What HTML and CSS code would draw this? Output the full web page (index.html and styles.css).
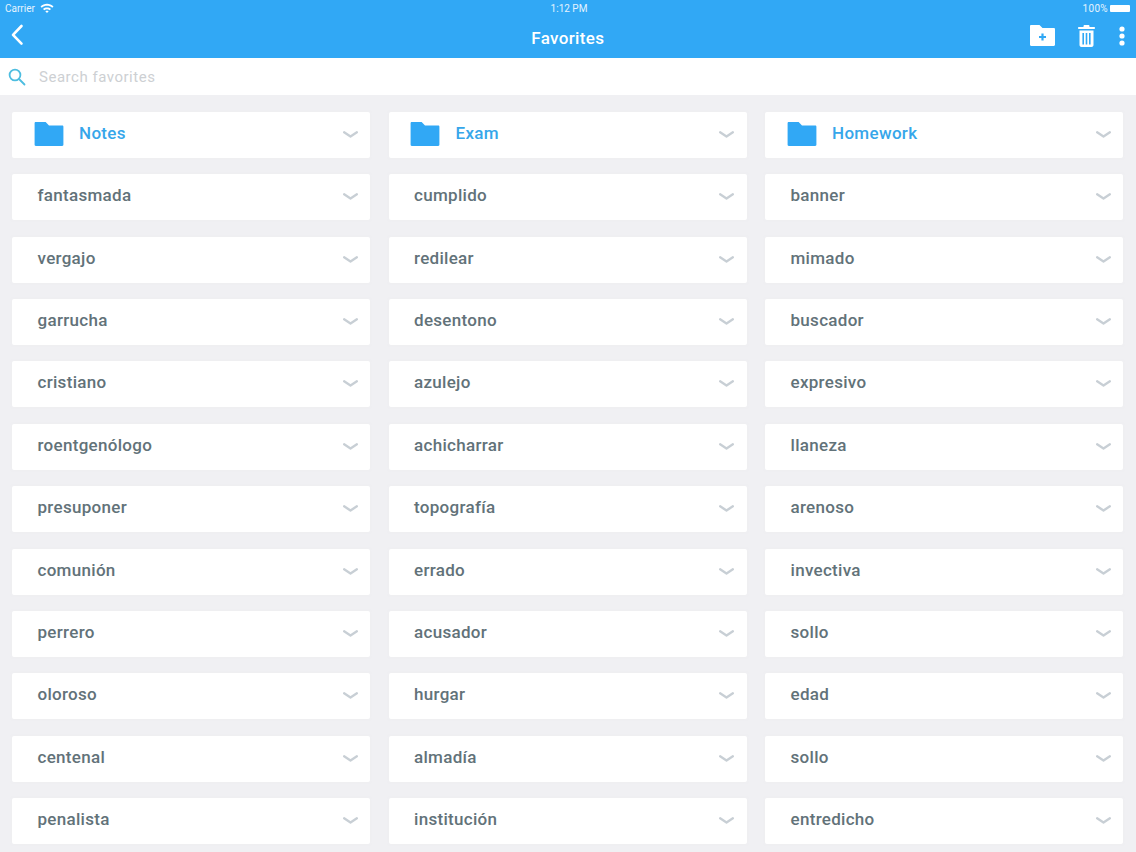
FILE: index.html
```html
<!DOCTYPE html>
<html lang="en">
<head>
<meta charset="utf-8">
<title>Favorites</title>
<link rel="stylesheet" href="styles.css">
</head>
<body>
<svg class="defs" width="0" height="0" aria-hidden="true">
  <symbol id="chev" viewBox="0 0 16 7"><path d="M1.2 1.2 L8 5.6 L14.8 1.2" fill="none" stroke="currentColor" stroke-width="2.5" stroke-linecap="round" stroke-linejoin="round"/></symbol>
  <symbol id="folder" viewBox="0 0 30 25"><path d="M0 1.2C0 .5.5 0 1.2 0H11.5L15 3.6H28.8C29.5 3.6 30 4.1 30 4.8V23.8C30 24.5 29.5 25 28.8 25H1.2C.5 25 0 24.5 0 23.8Z" fill="currentColor"/></symbol>
</svg>
<header class="top">
  <div class="status">
    <div class="status-left">
      <span>Carrier</span>
      <svg class="wifi" viewBox="0 0 14 10" width="14" height="10"><path d="M.5 3.4C4.2 0 9.8 0 13.5 3.4L12.2 4.8C9.2 2.2 4.8 2.2 1.8 4.8Z M3 5.9C5.3 4 8.7 4 11 5.9L9.7 7.2C8.1 6 5.9 6 4.3 7.2Z M5.3 8.2C6.3 7.6 7.7 7.6 8.7 8.2L7 10Z" fill="#fff"/></svg>
    </div>
    <span class="clock">1:12 PM</span>
    <div class="status-right">
      <span>100%</span>
      <span class="battery"></span>
    </div>
  </div>
  <nav class="nav">
    <svg class="back" viewBox="0 0 14 22" width="14" height="22"><path d="M11.5 2 L3 10.8 L11.5 19.6" fill="none" stroke="#fff" stroke-width="2.6" stroke-linecap="round" stroke-linejoin="round"/></svg>
    <h1 class="title">Favorites</h1>
    <div class="actions">
      <svg viewBox="0 0 25 21" width="25" height="21"><path fill-rule="evenodd" d="M0 1.2C0 .5.5 0 1.2 0H9.5L12.5 3H23.8C24.5 3 25 3.5 25 4.2V19.8C25 20.5 24.5 21 23.8 21H1.2C.5 21 0 20.5 0 19.8Z M11.4 8.5V11H9V13H11.4V15.5H13.6V13H16V11H13.6V8.5Z" fill="#fff"/></svg>
      <svg viewBox="0 0 17 22" width="17" height="22"><path fill-rule="evenodd" d="M5.5 1.2C5.5.5 6 0 6.7 0H10.3C11 0 11.5.5 11.5 1.2V2H16C16.6 2 17 2.4 17 3S16.6 4 16 4H1C.4 4 0 3.6 0 3S.4 2 1 2H5.5Z M1.5 5.5H15.5V20C15.5 21.1 14.6 22 13.5 22H3.5C2.4 22 1.5 21.1 1.5 20Z M4.4 8V19.5H6V8Z M7.7 8V19.5H9.3V8Z M11 8V19.5H12.6V8Z" fill="#fff"/></svg>
      <svg class="dots" viewBox="0 0 6 20" width="6" height="20"><circle cx="3" cy="3" r="2.6" fill="#fff"/><circle cx="3" cy="10" r="2.6" fill="#fff"/><circle cx="3" cy="17" r="2.6" fill="#fff"/></svg>
    </div>
  </nav>
</header>
<div class="search">
  <svg viewBox="0 0 18 18" width="18" height="18"><circle cx="7" cy="7" r="5.4" fill="none" stroke="#4dbde0" stroke-width="1.8"/><path d="M11 11 L16.5 16.5" stroke="#4dbde0" stroke-width="1.8" stroke-linecap="round"/></svg>
  <span class="placeholder">Search favorites</span>
</div>
<main class="grid">
  <div class="card folder"><svg class="folder-icon"><use href="#folder"/></svg><span class="folder-name">Notes</span><svg class="chev"><use href="#chev"/></svg></div>
  <div class="card folder"><svg class="folder-icon"><use href="#folder"/></svg><span class="folder-name">Exam</span><svg class="chev"><use href="#chev"/></svg></div>
  <div class="card folder"><svg class="folder-icon"><use href="#folder"/></svg><span class="folder-name">Homework</span><svg class="chev"><use href="#chev"/></svg></div>
  <div class="card"><span class="word">fantasmada</span><svg class="chev"><use href="#chev"/></svg></div>
  <div class="card"><span class="word">cumplido</span><svg class="chev"><use href="#chev"/></svg></div>
  <div class="card"><span class="word">banner</span><svg class="chev"><use href="#chev"/></svg></div>
  <div class="card"><span class="word">vergajo</span><svg class="chev"><use href="#chev"/></svg></div>
  <div class="card"><span class="word">redilear</span><svg class="chev"><use href="#chev"/></svg></div>
  <div class="card"><span class="word">mimado</span><svg class="chev"><use href="#chev"/></svg></div>
  <div class="card"><span class="word">garrucha</span><svg class="chev"><use href="#chev"/></svg></div>
  <div class="card"><span class="word">desentono</span><svg class="chev"><use href="#chev"/></svg></div>
  <div class="card"><span class="word">buscador</span><svg class="chev"><use href="#chev"/></svg></div>
  <div class="card"><span class="word">cristiano</span><svg class="chev"><use href="#chev"/></svg></div>
  <div class="card"><span class="word">azulejo</span><svg class="chev"><use href="#chev"/></svg></div>
  <div class="card"><span class="word">expresivo</span><svg class="chev"><use href="#chev"/></svg></div>
  <div class="card"><span class="word">roentgenólogo</span><svg class="chev"><use href="#chev"/></svg></div>
  <div class="card"><span class="word">achicharrar</span><svg class="chev"><use href="#chev"/></svg></div>
  <div class="card"><span class="word">llaneza</span><svg class="chev"><use href="#chev"/></svg></div>
  <div class="card"><span class="word">presuponer</span><svg class="chev"><use href="#chev"/></svg></div>
  <div class="card"><span class="word">topografía</span><svg class="chev"><use href="#chev"/></svg></div>
  <div class="card"><span class="word">arenoso</span><svg class="chev"><use href="#chev"/></svg></div>
  <div class="card"><span class="word">comunión</span><svg class="chev"><use href="#chev"/></svg></div>
  <div class="card"><span class="word">errado</span><svg class="chev"><use href="#chev"/></svg></div>
  <div class="card"><span class="word">invectiva</span><svg class="chev"><use href="#chev"/></svg></div>
  <div class="card"><span class="word">perrero</span><svg class="chev"><use href="#chev"/></svg></div>
  <div class="card"><span class="word">acusador</span><svg class="chev"><use href="#chev"/></svg></div>
  <div class="card"><span class="word">sollo</span><svg class="chev"><use href="#chev"/></svg></div>
  <div class="card"><span class="word">oloroso</span><svg class="chev"><use href="#chev"/></svg></div>
  <div class="card"><span class="word">hurgar</span><svg class="chev"><use href="#chev"/></svg></div>
  <div class="card"><span class="word">edad</span><svg class="chev"><use href="#chev"/></svg></div>
  <div class="card"><span class="word">centenal</span><svg class="chev"><use href="#chev"/></svg></div>
  <div class="card"><span class="word">almadía</span><svg class="chev"><use href="#chev"/></svg></div>
  <div class="card"><span class="word">sollo</span><svg class="chev"><use href="#chev"/></svg></div>
  <div class="card"><span class="word">penalista</span><svg class="chev"><use href="#chev"/></svg></div>
  <div class="card"><span class="word">institución</span><svg class="chev"><use href="#chev"/></svg></div>
  <div class="card"><span class="word">entredicho</span><svg class="chev"><use href="#chev"/></svg></div>
</main>
</body>
</html>
```

FILE: styles.css
```css
* { box-sizing: border-box; }
html, body { margin: 0; padding: 0; }
body {
  width: 1136px;
  height: 852px;
  overflow: hidden;
  background: #f0f0f3;
  font-family: Roboto, "Liberation Sans", sans-serif;
}
.defs { position: absolute; }
.top { height: 58px; background: #31a8f5; color: #fff; }
.status {
  height: 17px;
  padding: 0 5px;
  display: grid;
  grid-template-columns: 1fr auto 1fr;
  align-items: center;
  font-size: 10px;
  color: #e4f3fe;
}
.status-left { display: flex; align-items: center; gap: 5px; }
.wifi { margin-top: -2px; }
.clock { padding-left: 2px; }
.status-right { display: flex; align-items: center; justify-content: flex-end; gap: 2px; padding-right: 1px; }
.status-right span:first-child { letter-spacing: .3px; }
.battery { width: 20px; height: 7px; background: #fff; border-radius: 1px; }
.nav {
  height: 41px;
  padding: 0 11.5px 0 11px;
  display: grid;
  grid-template-columns: 1fr auto 1fr;
  align-items: center;
}
.back { margin-top: -5px; margin-left: -1px; }
.title { margin: 0; font-size: 17px; font-weight: 500; letter-spacing: .35px; padding-top: 1px; }
.actions { display: flex; justify-content: flex-end; align-items: center; gap: 23.5px; margin-top: -4px; }
.search {
  height: 37px;
  background: #fff;
  display: flex;
  align-items: center;
  gap: 13px;
  padding-left: 8px;
}
.placeholder { font-size: 15px; color: #cdd0d3; letter-spacing: .52px; }
.grid {
  display: grid;
  grid-template-columns: repeat(3, 358px);
  grid-auto-rows: 46px;
  column-gap: 18.5px;
  row-gap: 16.4px;
  padding: 16.8px 0 0 12px;
}
.card {
  background: #fff;
  border-radius: 2px;
  display: flex;
  align-items: center;
  padding: 0 12.5px 0 25.5px;
  box-shadow: 0 0 2px rgba(235, 235, 238, .5);
}
.card.folder { padding-left: 21.5px; gap: 15.5px; }
.word { font-size: 17px; font-weight: 500; color: #627279; letter-spacing: .3px; margin-top: -4px; }
.folder-name { font-size: 17px; font-weight: 500; color: #36a6ea; letter-spacing: .33px; margin-top: -4px; }
.folder-icon { width: 30px; height: 24px; color: #31a8f5; flex: none; margin-top: -2px; }
.chev { width: 15px; height: 7px; color: #c8cfd5; margin-left: auto; flex: none; margin-top: -1px; }
```
